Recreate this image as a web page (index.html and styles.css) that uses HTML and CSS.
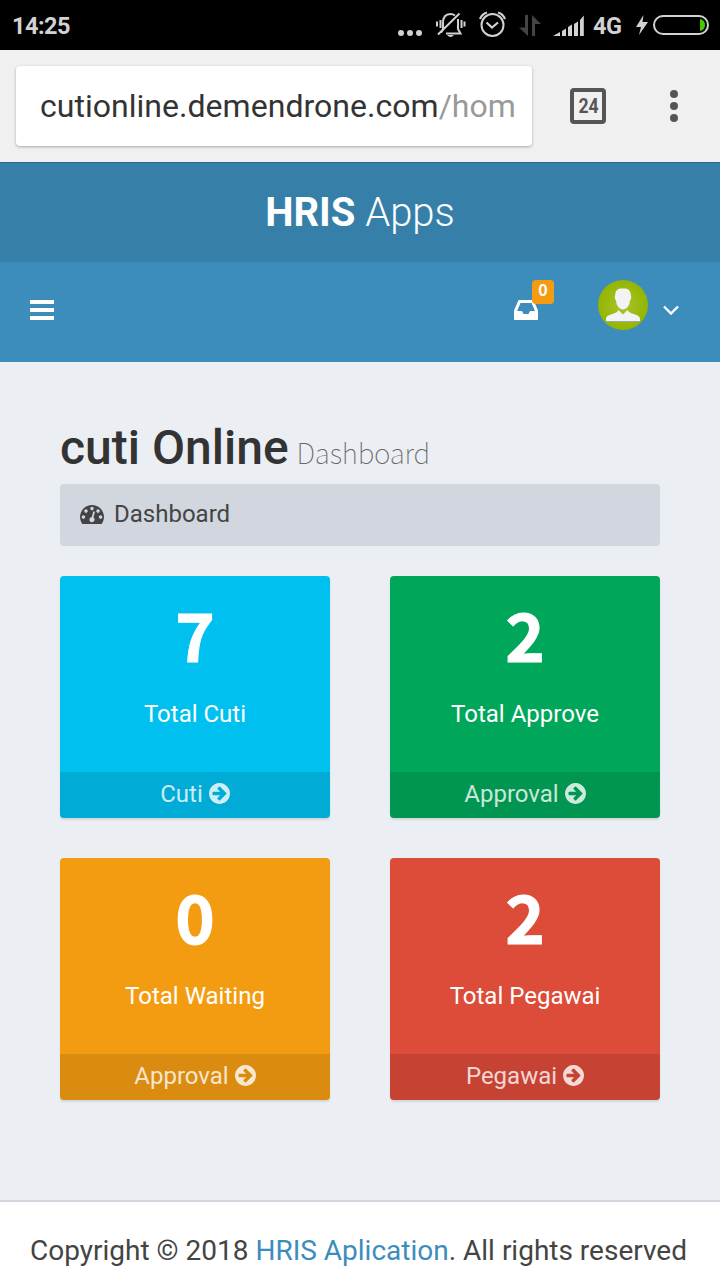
FILE: index.html
```
<!DOCTYPE html>
<html lang="id">
<head>
<meta charset="utf-8">
<title>HRIS Apps</title>
<link rel="stylesheet" href="styles.css">
</head>
<body>
<svg class="sprite" aria-hidden="true">
  <symbol id="arrow" viewBox="128 128 1536 1536"><path d="M1413 896q0-27-18-45l-91-91-362-362q-18-18-45-18t-45 18l-91 91q-18 18-18 45t18 45l189 189h-502q-26 0-45 19t-19 45v128q0 26 19 45t45 19h502l-189 189q-19 19-19 45t19 45l91 91q18 18 45 18t45-18l362-362 91-91q18-18 18-45zm251 0q0 209-103 385.5t-279.5 279.5-385.5 103-385.5-103-279.5-279.5-103-385.5 103-385.5 279.5-279.5 385.5-103 385.5 103 279.5 279.5 103 385.5z"/></symbol>
</svg>
<div class="status">
  <span class="clock">14:25</span>
  <svg class="status-icons" width="196" height="50" viewBox="394 0 196 50" fill="none" stroke="#d2d2d2" stroke-width="2">
    <g fill="#d2d2d2" stroke="none"><circle cx="401" cy="33" r="3"/><circle cx="410" cy="33" r="3"/><circle cx="419" cy="33" r="3"/></g>
    <path d="M441 32.500L443 30V23Q443 14 450.500 14Q453 14 455 15.500M458 19V29L460.500 33.500H446M438 34.500L459.500 13.500M440.500 20V28M437 21.500V26.500M461.500 20V28M464.500 21.500V26.500"/>
    <path d="M447 35H454Q450.500 39 447 35Z" fill="#d2d2d2" stroke="none"/>
    <circle cx="492.500" cy="25" r="11"/>
    <path d="M480 19Q482 14 487 12.500M505 19Q503 14 498 12.500M486.500 22.500L492 27.500L498 22.500" stroke-width="2.200"/>
    <path d="M525 15H528V36L519 27.500H525ZM532 15L541 24H535V36H532Z" fill="#444" stroke="none"/>
    <path d="M553 36L560 32V36ZM562 31L566 28.500V36H562ZM568 27L572 24.500V36H568ZM574 24L578 21.500V36H574ZM580 20L583.800 15.500V36H580Z" fill="#d2d2d2" stroke="none"/>
  </svg>
  <span class="network">4G</span>
  <svg class="battery" width="76" height="50" viewBox="634 0 76 50">
    <path d="M643.500 15L636 27H641L639 35L648 22H642.500Z" fill="#d2d2d2"/>
    <rect x="654" y="16" width="54" height="18" rx="9" fill="none" stroke="#d2d2d2" stroke-width="2"/>
    <path d="M700 19Q705 20 705 25T700 31Z" fill="#45c800"/>
  </svg>
</div>
<div class="browser">
  <div class="url"><span class="host">cutionline.demendrone.com</span>/hom</div>
  <div class="tabs"><span>24</span></div>
  <div class="more"><i></i><i></i><i></i></div>
</div>
<header>
  <div class="logo"><b>HRIS</b> Apps</div>
  <nav>
    <div class="burger"><i></i><i></i><i></i></div>
    <div class="inbox">
      <svg width="24" height="20" viewBox="128 256 1536 1280" preserveAspectRatio="none" fill="#fff"><path d="M1151 960h316q-1-3-2.500-8t-2.500-8l-212-496h-708l-212 496q-1 2-2.500 8t-2.500 8h316l95 192h320zm513 30v482q0 26-19 45t-45 19h-1408q-26 0-45-19t-19-45v-482q0-62 25-123l238-552q10-25 36.500-42t52.500-17h832q26 0 52.500 17t36.500 42l238 552q25 61 25 123z"/></svg>
      <span class="badge">0</span>
    </div>
    <svg class="avatar" width="50" height="50" viewBox="0 0 50 50">
      <defs><radialGradient id="lime" cx=".5" cy=".5" r=".5"><stop offset="0" stop-color="#a9c52b"/><stop offset="1" stop-color="#93b500"/></radialGradient></defs>
      <circle cx="25" cy="25" r="25" fill="url(#lime)"/>
      <path d="M25 8.500C30 8 33 10.500 32.700 15C33.800 17 33 19.500 32 20.500C31.500 26 28.500 29.500 25 29.500S18.500 26 18 20.500C17 19.500 16.200 17 17.300 15C17 10.500 20 8 25 8.500ZM20.500 30L25 34.500L29.500 30C31.500 35 41.500 33.500 42 38.500V41.500H8V38.500C8.500 33.500 18.500 35 20.500 30Z" fill="#f3f3f5"/>
      <path d="M8 41.500H42" stroke="#a5a8a0"/>
    </svg>
    <svg class="chevron" width="16" height="10" viewBox="0 0 16 10"><path d="M1 1.500L8 8.500L15 1.500" fill="none" stroke="#fff" stroke-width="2.400"/></svg>
  </nav>
</header>
<main>
  <h1>cuti Online <small>Dashboard</small></h1>
  <div class="crumb">
    <svg width="24" height="19" viewBox="0 256 1792 1408" fill="#444"><path d="M384 1152q0-53-37.500-90.500t-90.500-37.500-90.500 37.500-37.500 90.500 37.500 90.500 90.500 37.500 90.500-37.500 37.500-90.500zm192-448q0-53-37.500-90.500t-90.500-37.500-90.500 37.500-37.500 90.500 37.500 90.500 90.500 37.500 90.500-37.500 37.500-90.500zm428 481l101-382q6-26-7.500-48.500t-38.500-29.500-48 6.500-30 39.500l-101 382q-60 5-107 43.500t-63 98.500q-20 77 20 146t117 89 146-20 89-117q16-60-6-117t-72-91zm660-33q0-53-37.500-90.500t-90.500-37.500-90.500 37.500-37.500 90.500 37.500 90.500 90.500 37.500 90.500-37.500 37.500-90.500zm-640-640q0-53-37.500-90.500t-90.500-37.500-90.500 37.500-37.500 90.500 37.500 90.500 90.500 37.500 90.500-37.500 37.500-90.500zm448 192q0-53-37.500-90.500t-90.500-37.500-90.500 37.500-37.500 90.500 37.500 90.500 90.500 37.500 90.500-37.500 37.500-90.500zm320 448q0 261-141 483-19 29-54 29h-1402q-35 0-54-29-141-221-141-483 0-182 71-348t191-286 286-191 348-71 348 71 286 191 191 286 71 348z"/></svg>
    <span>Dashboard</span>
  </div>
  <div class="cards">
    <section class="card aqua"><div class="count">7</div><p>Total Cuti</p><a>Cuti <svg><use href="#arrow"/></svg></a></section>
    <section class="card green"><div class="count">2</div><p>Total Approve</p><a>Approval <svg><use href="#arrow"/></svg></a></section>
    <section class="card orange"><div class="count">0</div><p>Total Waiting</p><a>Approval <svg><use href="#arrow"/></svg></a></section>
    <section class="card red"><div class="count">2</div><p>Total Pegawai</p><a>Pegawai <svg><use href="#arrow"/></svg></a></section>
  </div>
</main>
<footer>Copyright © 2018 <a>HRIS Aplication</a>. All rights reserved</footer>
</body>
</html>
```
FILE: styles.css
```
* { box-sizing: border-box; }
body {
  margin: 0;
  width: 720px;
  height: 1280px;
  overflow: hidden;
  display: flex;
  flex-direction: column;
  background: #ebeef3;
  font-family: Roboto, sans-serif;
  color: #444;
}
svg { display: block; flex: none; }
.sprite { position: absolute; width: 0; height: 0; }

.status {
  height: 50px;
  flex: none;
  display: flex;
  align-items: center;
  padding: 0 10px 0 12px;
  background: #000;
  color: #d2d2d2;
  font-size: 23.5px;
  font-weight: 700;
}
.clock { width: 382px; padding-top: 2px; letter-spacing: -.5px; }
.network { width: 44px; padding: 2px 0 0 3px; letter-spacing: -.4px; }

.browser {
  height: 112px;
  flex: none;
  display: flex;
  align-items: center;
  padding-left: 16px;
  background: #f0f0f0;
}
.url {
  width: 516px;
  height: 80px;
  padding-left: 24px;
  line-height: 80px;
  border-radius: 4px;
  background: #fff;
  box-shadow: 0 1px 3px rgba(0, 0, 0, .3);
  font-size: 32px;
  letter-spacing: .03px;
  color: #999;
  white-space: nowrap;
}
.host { color: #333; }
.tabs {
  width: 36px;
  height: 36px;
  margin-left: 38px;
  border: 4px solid #555;
  border-radius: 4px;
  display: flex;
  align-items: center;
  justify-content: center;
  font-size: 20px;
  font-weight: 700;
  color: #555;
}
.tabs span { transform: scaleX(.88); }
.more { margin-left: 64px; display: grid; gap: 4px; }
.more i { width: 8px; height: 8px; border-radius: 50%; background: #555; }

.logo {
  height: 100px;
  border-top: 1px solid #2b668b;
  background: #367fa9;
  color: #fff;
  font-size: 40px;
  font-weight: 300;
  line-height: 100px;
  text-align: center;
}
.logo b { font-weight: 700; }
nav {
  height: 100px;
  display: flex;
  align-items: flex-start;
  padding-left: 30px;
  background: #3c8dbc;
}
.burger { width: 24px; margin-top: 38px; display: grid; gap: 4px; }
.burger i { height: 4px; background: #fff; }
.inbox { position: relative; margin: 38px 0 0 460px; }
.badge {
  position: absolute;
  left: 18px;
  top: -20px;
  width: 22px;
  height: 24px;
  border-radius: 4px;
  background: #f39c12;
  color: #fff;
  font: 700 16px/18px "Noto Sans CJK JP", sans-serif;
  text-align: center;
}
.avatar { margin: 18px 0 0 60px; }
.chevron { margin: 43px 0 0 15px; }

main { height: 838px; flex: none; padding: 55px 60px 0; }
h1 {
  height: 62px;
  margin: 0 0 5px;
  color: #333;
  font-size: 48px;
  font-weight: 500;
  line-height: 62px;
  white-space: nowrap;
}
h1 small {
  margin-left: -4px;
  font: 100 28px/1 "Noto Sans CJK JP", sans-serif;
  letter-spacing: -.2px;
  color: #666;
}
.crumb {
  height: 62px;
  display: flex;
  align-items: center;
  gap: 10px;
  padding: 0 20px;
  border-radius: 4px;
  background: #d2d6de;
  font-size: 24px;
}
.crumb svg { margin-bottom: 1px; }
.crumb span { padding-bottom: 2px; }
.cards {
  display: grid;
  grid-template-columns: 270px 270px;
  gap: 40px 60px;
  margin-top: 30px;
}
.card {
  height: 242px;
  display: flex;
  flex-direction: column;
  border-radius: 4px;
  overflow: hidden;
  box-shadow: 0 2px 2px rgba(0, 0, 0, .1);
  color: #fff;
  font-size: 24px;
  text-align: center;
}
.count {
  height: 122px;
  font: 700 67px/114px "Noto Sans CJK JP", sans-serif;
  -webkit-text-stroke: 1px #fff;
}
.card p { height: 74px; margin: 0; line-height: 32px; }
.card a {
  height: 46px;
  display: flex;
  align-items: center;
  justify-content: center;
  gap: 6px;
  padding-bottom: 2px;
  background: rgba(0, 0, 0, .1);
  color: rgba(255, 255, 255, .8);
}
.card a svg { width: 21px; height: 21px; margin-bottom: 1px; fill: currentColor; }
.aqua { background: #00c0ef; }
.green { background: #00a65a; }
.orange { background: #f39c12; }
.red { background: #dd4b39; }

footer {
  height: 80px;
  flex: none;
  padding-left: 30px;
  border-top: 2px solid #d2d6de;
  background: #fff;
  font-size: 28px;
  line-height: 98px;
  white-space: nowrap;
}
footer a { color: #3c8dbc; }
```
